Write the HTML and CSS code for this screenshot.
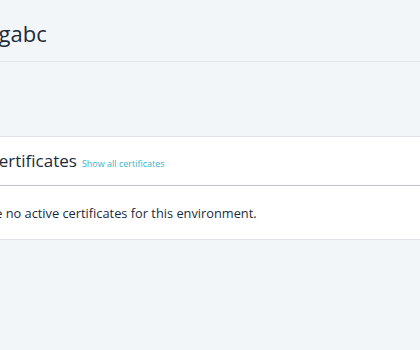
FILE: index.html
```html
<!DOCTYPE html>
<html lang="en">
<head>
<meta charset="utf-8">
<link rel="stylesheet" href="styles.css">
</head>
<body>
<div class="page">
  <header class="page-header">
    <h1 class="page-title"><span class="clip-title">stagin</span>gabc</h1>
  </header>
  <main class="content">
    <section class="panel">
      <div class="panel-head">
        <h2 class="panel-title"><span class="clip-head">C</span>ertificates</h2>
        <a class="panel-link" href="#">Show all certificates</a>
      </div>
      <div class="panel-body">
        <p class="empty"><span class="clip-body">There ar</span>e no active certificates for this environment.</p>
      </div>
    </section>
  </main>
</div>
</body>
</html>
```

FILE: styles.css
```css
html, body {
  margin: 0;
  padding: 0;
}
body {
  background: #f3f6f9;
  font-family: "Open Sans", "Noto Sans", sans-serif;
  color: #1c2b3b;
  overflow: hidden;
  width: 420px;
  height: 350px;
}
.page {
  width: 420px;
}
.page-header {
  height: 61px;
  border-bottom: 1px solid #e1e6eb;
  display: flex;
  align-items: center;
}
.page-title {
  margin: 0;
  font-weight: 400;
  font-size: 22px;
  line-height: 30px;
  white-space: nowrap;
  margin-left: -63px;
  padding-top: 4px;
}
.content {
  padding-top: 74px;
}
.panel {
  background: #fff;
  border-top: 1px solid #dfe3e7;
  border-bottom: 1px solid #dfe3e7;
}
.panel-head {
  height: 48px;
  border-bottom: 1px solid #b9c4cf;
  display: flex;
  align-items: center;
  gap: 5px;
  margin-left: -12px;
  white-space: nowrap;
}
.panel-title {
  margin: 0;
  font-weight: 400;
  font-size: 17px;
  line-height: 24px;
}
.panel-link {
  color: #3ab4c8;
  text-decoration: none;
  font-size: 9px;
  padding-top: 4px;
}
.panel-body {
  height: 53px;
  display: flex;
  align-items: center;
}
.empty {
  margin: 0;
  font-size: 12.8px;
  white-space: nowrap;
  margin-left: -55px;
  padding-top: 1px;
}
```
